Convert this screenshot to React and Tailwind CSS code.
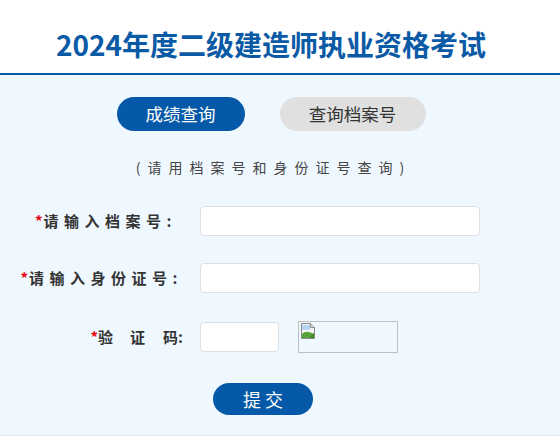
import React from 'react';

const cjk = { fontFamily: '"Noto Sans CJK SC", "Microsoft YaHei", sans-serif' };

function BrokenImage() {
  return (
    <svg width="16" height="16" viewBox="0 0 16 16">
      <path d="M1.5 0.5h9l4 4v11h-13z" fill="#f4f4f4" stroke="#8a8a8a" />
      <path d="M10.5 0.5v4h4" fill="#ddd" stroke="#8a8a8a" />
      <path d="M2 2h8v5H2z" fill="#b9d3f2" />
      <path d="M2 15V11c3-3 6-3 12 0v4z" fill="#55a33a" />
      <path d="M9 15l5-5v5z" fill="#3f8a2a" />
    </svg>
  );
}

export default function App() {
  return (
    <div className="w-[560px] h-[437px] bg-white overflow-hidden" style={cjk}>
      {/* 顶部标题 */}
      <header className="h-[75px] bg-white border-b-2 border-[#0b5aa6]">
        <div className="w-[542px] h-[73px] flex items-center justify-center">
          <h1 className="text-[28px] font-bold text-[#0b5aa6] leading-none pt-[15px]">
            2024年度二级建造师执业资格考试
          </h1>
        </div>
      </header>

      {/* 查询区域 */}
      <main className="h-[361px] bg-[#f0f8ff] border-b border-[#e3e8ec]">
        <div className="w-[542px] pt-[22px]">
          <div className="flex justify-center gap-[35px]">
            <button className="w-[128px] h-[34px] rounded-full bg-[#0659a8] text-white text-[17.5px]">
              成绩查询
            </button>
            <button className="w-[146px] h-[34px] rounded-full bg-[#e0e0e0] text-[#333] text-[17.5px]">
              查询档案号
            </button>
          </div>

          <p className="mt-[29px] text-center text-[14px] leading-none text-[#444] tracking-[7px] pl-[5px]">
            (请用档案号和身份证号查询)
          </p>

          <div className="mt-[32px] flex items-center h-[30px]">
            <div className="w-[200px] pr-[23px] text-right text-[15px] font-bold text-[#333] tracking-[5.5px]">
              <span className="text-red-600 tracking-[1px]">*</span>请输入档案号:
            </div>
            <input className="w-[280px] h-[30px] bg-white border border-[#dcdfe3] rounded-[4px] outline-none" />
          </div>

          <div className="mt-[27px] flex items-center h-[30px]">
            <div className="w-[200px] pr-[17px] text-right text-[15px] font-bold text-[#333] tracking-[5.5px]">
              <span className="text-red-600 tracking-[1px]">*</span>请输入身份证号:
            </div>
            <input className="w-[280px] h-[30px] bg-white border border-[#dcdfe3] rounded-[4px] outline-none" />
          </div>

          <div className="mt-[29px] flex items-center h-[30px]">
            <div className="w-[200px] pr-[17px] flex justify-end items-center text-[15px] font-bold text-[#333]">
              <span className="text-red-600">*</span>
              <span className="mr-[17px]">验</span>
              <span className="mr-[18px]">证</span>
              <span>码:</span>
            </div>
            <input className="w-[79px] h-[30px] bg-white border border-[#dcdfe3] rounded-[4px] outline-none" />
            <div className="ml-[19px] w-[100px] h-[32px] border border-[#c0c0c0] p-[1px]">
              <BrokenImage />
            </div>
          </div>

          <div className="mt-[31px] flex justify-center pr-[16px]">
            <button className="w-[100px] h-[32px] rounded-full bg-[#0659a8] text-white text-[18px]">
              提 交
            </button>
          </div>
        </div>
      </main>
    </div>
  );
}
